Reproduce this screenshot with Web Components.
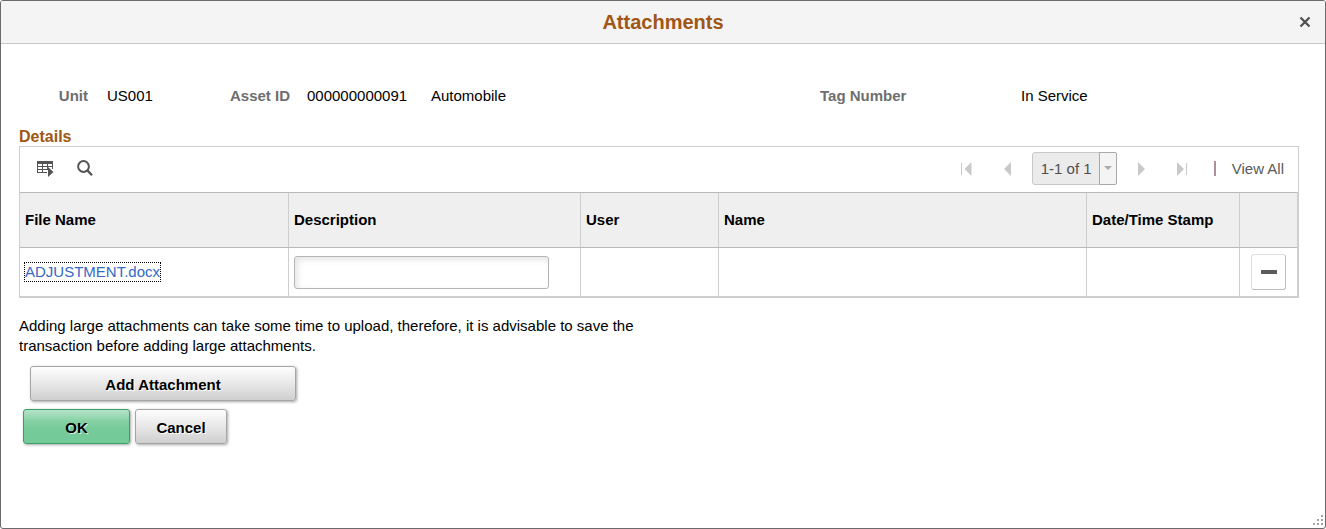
<!DOCTYPE html>
<html lang="en">
<head>
<meta charset="utf-8">
<title>Attachments</title>
<style>
html, body { height: 100%; margin: 0; }
body { font: 15px/20px "Liberation Sans", Arial, sans-serif; color: #000; background: #fff; }
</style>
</head>
<body>
<modal-dialog heading="Attachments">
  <asset-summary></asset-summary>
  <attachment-grid heading="Details"></attachment-grid>
  <help-note>Adding large attachments can take some time to upload, therefore, it is advisable to save the transaction before adding large attachments.</help-note>
  <action-bar>
    <push-button slot="primary" wide>Add Attachment</push-button>
    <push-button variant="confirm">OK</push-button>
    <push-button>Cancel</push-button>
  </action-bar>
</modal-dialog>

<script>
function define(name, markup, setup) {
  const template = document.createElement('template');
  template.innerHTML = markup;
  customElements.define(name, class extends HTMLElement {
    constructor() {
      super();
      this.attachShadow({ mode: 'open' }).append(template.content.cloneNode(true));
    }
    connectedCallback() {
      if (setup) setup(this, this.shadowRoot);
    }
  });
}

define('modal-dialog', `
<style>
:host { display: block; height: 100%; }
section { box-sizing: border-box; position: relative; min-height: 100%; border: 1px solid #6b696b; border-radius: 3px; background: #fff; overflow: hidden; }
header { display: grid; grid-template-columns: 40px 1fr 40px; align-items: center; height: 42px; background: #f4f4f4; border-bottom: 1px solid #c8c8c8; }
h1 { grid-column: 2; margin: 0; font-size: 20px; line-height: 24px; text-align: center; color: #a05614; }
button { display: grid; place-items: center; width: 24px; height: 24px; padding: 0; margin: 0 auto; border: 0; background: none; }
main { padding: 42px 26px 20px 18px; }
.grip { position: absolute; right: 1px; bottom: 2px; }
</style>
<section role="dialog" aria-labelledby="title">
  <header>
    <h1 id="title"></h1>
    <button type="button" aria-label="Close"><svg width="12" height="12" viewBox="0 0 12 12"><path d="M1.500 1.500l9 9M10.500 1.500l-9 9" stroke="#504e4e" stroke-width="2.200"/></svg></button>
  </header>
  <main><slot></slot></main>
  <svg class="grip" width="11" height="11" viewBox="0 0 11 11" fill="#a3a3a3" aria-hidden="true"><path d="M8 0h2v2H8zM4 4h2v2H4zM8 4h2v2H8zM0 8h2v2H0zM4 8h2v2H4zM8 8h2v2H8z"/></svg>
</section>`, (host, root) => {
  root.querySelector('h1').textContent = host.getAttribute('heading');
});

define('asset-summary', `
<style>
:host { display: block; }
div { display: grid; grid-template-columns: 69px 104px 58px 105px 370fr 182px 278fr; column-gap: 19px; white-space: nowrap; }
label { font-weight: bold; color: #6e6e6e; }
.end { text-align: right; }
</style>
<div>
  <label class="end" for="unit">Unit</label><output id="unit">US001</output>
  <label class="end" for="asset">Asset ID</label><output id="asset">000000000091</output>
  <span>Automobile</span>
  <label for="tag">Tag Number</label><output id="tag">In Service</output>
</div>`);

define('grid-toolbar', `
<style>
:host { box-sizing: border-box; display: flex; align-items: center; justify-content: space-between; height: 45px; padding: 0 14px 2px 13px; color: #555; }
.tools, .pager { display: flex; align-items: center; }
.tools { gap: 16px; }
button { display: grid; place-items: center; width: 24px; height: 24px; padding: 0; border: 0; background: none; color: inherit; }
.pager { gap: 16px; }
.picker { position: relative; display: flex; margin: 0 -3px; }
select { box-sizing: border-box; width: 85px; height: 33px; margin: 0; padding: 0 0 0 8px; appearance: none; border: 1px solid #c8c8c8; border-radius: 3px; background: #ebebeb; color: #4f4f4f; opacity: 1; font: inherit; }
.arrow { position: absolute; right: 0; top: 0; bottom: 0; box-sizing: border-box; width: 18px; display: grid; place-items: center; border: 1px solid #a9a9a9; border-radius: 0 2px 2px 0; background: #f4f4f4; pointer-events: none; }
.bar { width: 2px; height: 15px; background: #ab9097; }
a { color: #5a5a5a; text-decoration: none; }
.end { display: flex; align-items: center; gap: 16px; padding-left: 4px; }
</style>
<div class="tools">
  <button type="button" aria-label="Grid actions"><svg width="17" height="16" viewBox="0 0 17 16"><path d="M0 0h16v3H0z" fill="#555"/><path d="M.5 3v9M5.500 3v9M10.500 3v5M15.500 3v5M0 5.500h16M0 8.500h11M0 11.500h10" fill="none" stroke="#555"/><path d="M11 6l5.500 5-5.500 5z" fill="#555"/></svg></button>
  <button type="button" aria-label="Find"><svg width="16" height="17" viewBox="0 0 16 17" fill="none" stroke="#555"><circle cx="6.500" cy="6.500" r="5.400" stroke-width="2"/><path d="M10.500 10.500L15 15.300" stroke-width="2.400"/></svg></button>
</div>
<div class="pager">
  <button type="button" aria-label="First"><svg width="11" height="14" viewBox="0 0 11 14" fill="#c9c9c9"><path d="M0 1h1v12H0zM10.500 0v14L3.500 7z"/></svg></button>
  <button type="button" aria-label="Previous"><svg width="8" height="14" viewBox="0 0 8 14" fill="#c9c9c9"><path d="M8 0v14L1 7z"/></svg></button>
  <div class="picker"><select aria-label="Rows shown"><option>1-1 of 1</option></select><span class="arrow"><svg width="8" height="5" viewBox="0 0 8 5" fill="#aaa"><path d="M0 0h8L4 4z"/></svg></span></div>
  <button type="button" aria-label="Next"><svg width="8" height="14" viewBox="0 0 8 14" fill="#c9c9c9"><path d="M0 0l7 7-7 7z"/></svg></button>
  <button type="button" aria-label="Last"><svg width="11" height="14" viewBox="0 0 11 14" fill="#c9c9c9"><path d="M10 1h1v12h-1zM1 0l7 7-7 7z"/></svg></button>
  <div class="end"><span class="bar"></span><a href="#all">View All</a></div>
</div>`);

define('attachment-grid', `
<style>
:host { display: block; margin-top: 22px; }
h2 { margin: 0; font-size: 16px; line-height: 18px; color: #a05614; }
.frame { border: 1px solid #cecece; }
table { width: 100%; table-layout: fixed; border-collapse: separate; border-spacing: 0; border-bottom: 1px solid #cecece; border-right: 1px solid #cecece; }
th, td { box-sizing: border-box; padding: 0 5px; text-align: left; vertical-align: middle; white-space: nowrap; border-right: 1px solid #cecece; }
th:last-child, td:last-child { border-right: 0; }
th { height: 56px; background: #efefef; border-top: 1px solid #b9b9b9; border-bottom: 1px solid #b9b9b9; }
td { height: 48px; }
td:first-child { padding-left: 4px; }
a { display: inline-block; border: 1px dotted #000; line-height: 18px; color: #3468c8; text-decoration: none; }
input { box-sizing: border-box; display: block; width: 255px; max-width: 100%; height: 33px; margin: 0; border: 1px solid #b5b5b5; border-radius: 3px; background: #fff; box-shadow: inset 3px 3px 6px #e6e6e6; font: inherit; }
.remove { box-sizing: border-box; display: grid; place-items: center; width: 35px; height: 36px; margin: 0 auto; padding: 0; border: 1px solid #dedede; border-right-color: #bdbdbd; border-bottom-color: #bdbdbd; border-radius: 3px; background: #fff; }
.name { width: 269px; } .desc { width: 292px; } .user { width: 138px; } .stamp { width: 153px; } .act { width: 57px; }
</style>
<h2></h2>
<div class="frame">
  <grid-toolbar></grid-toolbar>
  <table>
    <colgroup><col class="name"><col class="desc"><col class="user"><col><col class="stamp"><col class="act"></colgroup>
    <thead><tr><th>File Name</th><th>Description</th><th>User</th><th>Name</th><th>Date/Time Stamp</th><th></th></tr></thead>
    <tbody><tr><td><a href="#file">ADJUSTMENT.docx</a></td><td><input type="text" aria-label="Description"></td><td></td><td></td><td></td><td><button class="remove" type="button" aria-label="Delete row"><svg width="16" height="4" viewBox="0 0 16 4"><rect width="16" height="4" rx=".5" fill="#5c5a5b"/></svg></button></td></tr></tbody>
  </table>
</div>`, (host, root) => {
  root.querySelector('h2').textContent = host.getAttribute('heading');
});

define('help-note', `
<style>
:host { display: block; margin-top: 18px; max-width: 620px; }
p { margin: 0; }
</style>
<p><slot></slot></p>`);

define('action-bar', `
<style>
:host { display: block; margin-top: 10px; }
.primary { padding-left: 11px; }
.row { display: flex; gap: 5px; margin-top: 8px; padding-left: 4px; }
</style>
<div class="primary"><slot name="primary"></slot></div>
<div class="row"><slot></slot></div>`);

define('push-button', `
<style>
:host { display: block; width: 92px; }
:host([wide]) { width: 266px; }
:host([variant="confirm"]) { width: 107px; }
button { box-sizing: border-box; display: block; width: 100%; height: 35px; margin: 0; padding: 2px 0 0; border: 1px solid #a5a5a5; border-radius: 3px; background: linear-gradient(#fdfdfd, #e8e8e8 50%, #cfcfcf); box-shadow: 1px 1px 3px rgba(0,0,0,.35); font: inherit; font-weight: bold; color: #000; text-shadow: 1px 1px 0 #fff; }
:host([variant="confirm"]) button { border-color: #37a066; background: linear-gradient(#b5e5c9, #84d0a4 35%, #74ca98 60%); text-shadow: 1px 1px 0 #d2f0de; }
</style>
<button type="button"><slot></slot></button>`);
</script>
</body>
</html>
